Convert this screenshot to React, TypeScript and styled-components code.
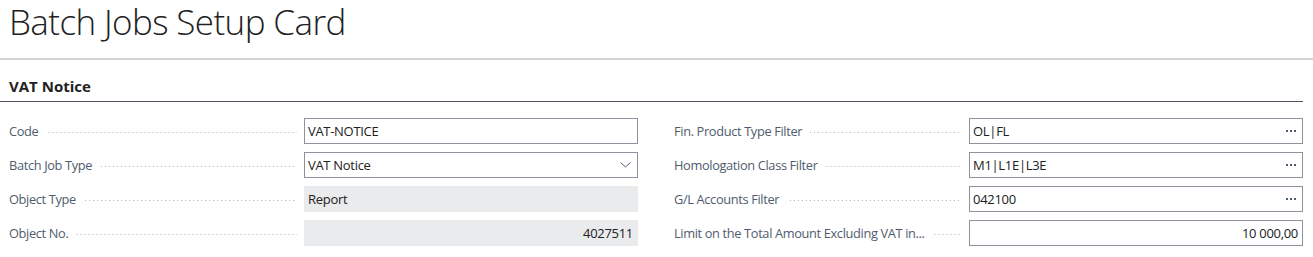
import React from 'react';
import styled, { createGlobalStyle } from 'styled-components';

const Global = createGlobalStyle`
  html, body { margin: 0; padding: 0; background: #ffffff; }
  body { font-family: "Open Sans", "Noto Sans", sans-serif; color: #212121; }
  * { box-sizing: border-box; }
`;

const Page = styled.div`
  width: 1313px;
`;

const Title = styled.h1`
  margin: 0;
  height: 58px;
  padding-left: 9px;
  font-size: 35px;
  line-height: 44px;
  font-weight: 300;
  letter-spacing: -0.6px;
  color: #212121;
`;

const Rule = styled.div`
  height: 2px;
  background: #d2d4d7;
`;

const Section = styled.section`
  margin-right: 10px;
`;

const SectionHeader = styled.h2`
  margin: 0;
  height: 42px;
  padding: 16px 0 0 9px;
  font-size: 15px;
  line-height: 20px;
  font-weight: 700;
  color: #212121;
  border-bottom: 1px solid #4f5661;
`;

const Grid = styled.div`
  display: grid;
  grid-template-columns: 629px 629px;
  column-gap: 36px;
  padding: 16px 0 0 9px;
`;

const Column = styled.div`
  display: flex;
  flex-direction: column;
  gap: 8px;
`;

const Row = styled.div`
  display: grid;
  grid-template-columns: 295px 1fr;
  height: 26px;
  align-items: center;
`;

const Caption = styled.div`
  display: flex;
  align-items: center;
  height: 100%;
  font-size: 12.8px;
  letter-spacing: -0.35px;
  color: #505c6d;
  white-space: nowrap;
  overflow: hidden;
`;

const Leader = styled.span`
  flex: 1;
  height: 1px;
  margin: 3px 7px 0 8px;
  background-image: linear-gradient(to right, #aab0b8 1px, transparent 1px);
  background-size: 4px 1px;
  background-repeat: repeat-x;
  background-position: right top;
`;

const Field = styled.div<{ $readonly?: boolean; $right?: boolean }>`
  display: flex;
  align-items: center;
  justify-content: ${(p) => (p.$right ? 'flex-end' : 'space-between')};
  height: 26px;
  padding: 0 ${(p) => (p.$right ? '4px' : '6px')} 0 3px;
  border: 1px solid ${(p) => (p.$readonly ? '#eaebec' : '#8c939d')};
  background: ${(p) => (p.$readonly ? '#eaebec' : '#ffffff')};
  font-size: 13px;
  letter-spacing: -0.3px;
  color: #212121;
`;

const Value = styled.span`
  white-space: nowrap;
`;

const Chevron = () => (
  <svg width="11" height="6" viewBox="0 0 11 6" aria-hidden="true">
    <polyline points="0.5,0.5 5.5,5 10.5,0.5" fill="none" stroke="#505c6d" strokeWidth="1" />
  </svg>
);

const Dots = () => (
  <svg width="10" height="2" viewBox="0 0 10 2" aria-hidden="true">
    <rect x="0" y="0" width="2" height="2" fill="#505c6d" />
    <rect x="4" y="0" width="2" height="2" fill="#505c6d" />
    <rect x="8" y="0" width="2" height="2" fill="#505c6d" />
  </svg>
);

type Item = {
  label: string;
  value: string;
  kind?: 'text' | 'select' | 'lookup' | 'readonly';
  right?: boolean;
};

const left: Item[] = [
  { label: 'Code', value: 'VAT-NOTICE' },
  { label: 'Batch Job Type', value: 'VAT Notice', kind: 'select' },
  { label: 'Object Type', value: 'Report', kind: 'readonly' },
  { label: 'Object No.', value: '4027511', kind: 'readonly', right: true },
];

const rightItems: Item[] = [
  { label: 'Fin. Product Type Filter', value: 'OL|FL', kind: 'lookup' },
  { label: 'Homologation Class Filter', value: 'M1|L1E|L3E', kind: 'lookup' },
  { label: 'G/L Accounts Filter', value: '042100', kind: 'lookup' },
  { label: 'Limit on the Total Amount Excluding VAT in...', value: '10 000,00', right: true },
];

const FieldRow = ({ item }: { item: Item }) => (
  <Row>
    <Caption>
      {item.label}
      <Leader />
    </Caption>
    <Field $readonly={item.kind === 'readonly'} $right={item.right}>
      <Value>{item.value}</Value>
      {item.kind === 'select' && <Chevron />}
      {item.kind === 'lookup' && <Dots />}
    </Field>
  </Row>
);

export default function App() {
  return (
    <Page>
      <Global />
      <Title>Batch Jobs Setup Card</Title>
      <Rule />
      <Section>
        <SectionHeader>VAT Notice</SectionHeader>
        <Grid>
          <Column>
            {left.map((it) => (
              <FieldRow key={it.label} item={it} />
            ))}
          </Column>
          <Column>
            {rightItems.map((it) => (
              <FieldRow key={it.label} item={it} />
            ))}
          </Column>
        </Grid>
      </Section>
    </Page>
  );
}
